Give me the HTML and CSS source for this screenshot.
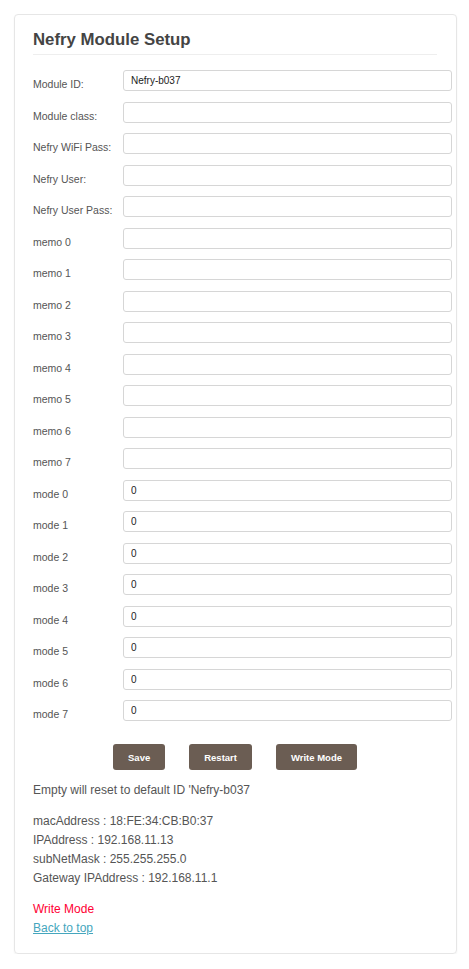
FILE: index.html
```html
<!DOCTYPE html>
<html>
<head>
<meta charset="utf-8">
<link rel="stylesheet" href="styles.css">
</head>
<body>
<div class="card">
  <h1 class="title">Nefry Module Setup</h1>
  <form class="form">
    <div class="row"><label class="label">Module ID:</label><input class="input" value="Nefry-b037"></div>
    <div class="row"><label class="label">Module class:</label><input class="input"></div>
    <div class="row"><label class="label">Nefry WiFi Pass:</label><input class="input"></div>
    <div class="row"><label class="label">Nefry User:</label><input class="input"></div>
    <div class="row"><label class="label">Nefry User Pass:</label><input class="input"></div>
    <div class="row"><label class="label">memo 0</label><input class="input"></div>
    <div class="row"><label class="label">memo 1</label><input class="input"></div>
    <div class="row"><label class="label">memo 2</label><input class="input"></div>
    <div class="row"><label class="label">memo 3</label><input class="input"></div>
    <div class="row"><label class="label">memo 4</label><input class="input"></div>
    <div class="row"><label class="label">memo 5</label><input class="input"></div>
    <div class="row"><label class="label">memo 6</label><input class="input"></div>
    <div class="row"><label class="label">memo 7</label><input class="input"></div>
    <div class="row"><label class="label">mode 0</label><input class="input" value="0"></div>
    <div class="row"><label class="label">mode 1</label><input class="input" value="0"></div>
    <div class="row"><label class="label">mode 2</label><input class="input" value="0"></div>
    <div class="row"><label class="label">mode 3</label><input class="input" value="0"></div>
    <div class="row"><label class="label">mode 4</label><input class="input" value="0"></div>
    <div class="row"><label class="label">mode 5</label><input class="input" value="0"></div>
    <div class="row"><label class="label">mode 6</label><input class="input" value="0"></div>
    <div class="row"><label class="label">mode 7</label><input class="input" value="0"></div>
    <div class="buttons">
      <button type="button" class="btn">Save</button>
      <button type="button" class="btn">Restart</button>
      <button type="button" class="btn">Write Mode</button>
    </div>
  </form>
  <p class="text">Empty will reset to default ID 'Nefry-b037</p>
  <p class="text">macAddress : 18:FE:34:CB:B0:37<br>IPAddress : 192.168.11.13<br>subNetMask : 255.255.255.0<br>Gateway IPAddress : 192.168.11.1</p>
  <p class="text"><span class="mode">Write Mode</span><br><a class="link" href="#">Back to top</a></p>
</div>
</body>
</html>
```

FILE: styles.css
```css
html, body {
  margin: 0;
  padding: 0;
  background: #fff;
}
body {
  padding: 14px 0 0 14px;
  font-family: "Liberation Sans", Arial, sans-serif;
  color: #555;
}
.card {
  box-sizing: content-box;
  width: 423px;
  border: 1px solid #e6e6e6;
  border-radius: 4px;
  box-shadow: 0 1px 2px rgba(0, 0, 0, 0.06);
  padding: 15px 0 15px 18px;
}
.title {
  margin: 0 19px 0 0;
  font-size: 16.8px;
  line-height: 20px;
  font-weight: bold;
  color: #444;
  padding-bottom: 4px;
  border-bottom: 1px solid #eee;
}
.form {
  margin: 15px 0 0 0;
}
.row {
  display: flex;
  align-items: flex-start;
  height: 31.5px;
}
.label {
  width: 90px;
  font-size: 10.5px;
  line-height: 21px;
  padding-top: 4px;
  color: #555;
}
.input {
  box-sizing: border-box;
  width: 329px;
  height: 21px;
  margin: 0;
  border: 1px solid #d6d6d6;
  border-radius: 3px;
  padding: 0 7px;
  font-family: "Liberation Sans", Arial, sans-serif;
  font-size: 10px;
  color: #222;
  background: #fff;
  outline: none;
}
.buttons {
  display: flex;
  justify-content: center;
  gap: 24px;
  margin: 12.5px 0 0 -19px;
}
.btn {
  height: 26px;
  padding: 0 15px;
  border: 0;
  border-radius: 3px;
  background: #6b5d53;
  color: #fff;
  font-family: "Liberation Sans", Arial, sans-serif;
  font-size: 9.5px;
  font-weight: bold;
}
.text {
  margin: 11px 0 0 0;
  font-size: 12px;
  line-height: 19px;
  color: #555;
}
.text + .text {
  margin-top: 12px;
}
.mode {
  color: #ff0033;
}
.link {
  color: #45a6bd;
  text-decoration: underline;
}
```
